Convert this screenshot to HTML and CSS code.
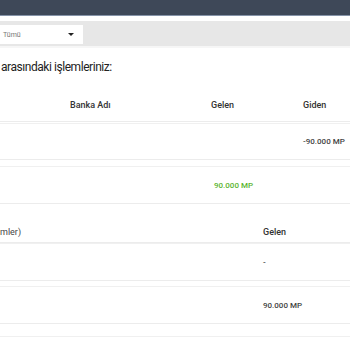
FILE: index.html
```html
<!DOCTYPE html>
<html lang="tr">
<head>
  <meta charset="UTF-8">
  <meta name="viewport" content="width=device-width, initial-scale=1.0">
  <title>Hesap Hareketleri</title>
  <link rel="stylesheet" href="styles.css">
</head>
<body>
  <div class="topbar"></div>

  <div class="filter">
    <div class="select">
      <span>Tümü</span>
      <span class="caret"></span>
    </div>
  </div>

  <p class="title">arasındaki işlemleriniz:</p>

  <div class="table bank">
    <div class="row head">
      <div></div>
      <div>Banka Adı</div>
      <div>Gelen</div>
      <div>Giden</div>
    </div>
    <div class="row">
      <div></div>
      <div></div>
      <div></div>
      <div class="value">-90.000 MP</div>
    </div>
    <div class="row">
      <div></div>
      <div></div>
      <div class="value green">90.000 MP</div>
      <div></div>
    </div>
  </div>

  <div class="table other">
    <div class="row head">
      <div class="label">mler)</div>
      <div>Gelen</div>
    </div>
    <div class="row">
      <div></div>
      <div class="value">-</div>
    </div>
    <div class="row">
      <div></div>
      <div class="value">90.000 MP</div>
    </div>
    <div class="row last"></div>
  </div>
</body>
</html>
```

FILE: styles.css
```css
body {
  margin: 0;
  font-family: Roboto, "Noto Sans", sans-serif;
  color: #333;
  background: #fff;
  overflow: hidden;
}

.topbar {
  height: 15px;
  background: #3e4858;
  border-bottom: 1px solid #8593a8;
  margin-bottom: 5px;
}

.filter {
  height: 27px;
  background: #e7e7e7;
  padding-top: 4px;
  box-sizing: border-box;
  border-bottom: 2px solid #f6f6f6;
}

.select {
  width: 83px;
  height: 19px;
  background: #fff;
  display: flex;
  align-items: center;
  justify-content: space-between;
  padding: 0 9px 0 3px;
  box-sizing: border-box;
  font-size: 7px;
  color: #777;
}

.caret {
  width: 0;
  height: 0;
  border-left: 3px solid transparent;
  border-right: 3px solid transparent;
  border-top: 3px solid #222;
}

.title {
  margin: 12px 0 0 1px;
  height: 28px;
  font-size: 12px;
  letter-spacing: -0.45px;
  color: #222;
}

.row {
  display: grid;
  align-items: center;
  box-sizing: border-box;
  border-top: 1px solid #f0f0f0;
  border-bottom: 1px solid #ececec;
  font-size: 8px;
  font-weight: 500;
}

.bank .row {
  grid-template-columns: 70px 141px 92px 1fr;
  height: 37px;
  margin-bottom: 6px;
}

.bank .row:last-child {
  height: 38px;
  margin-bottom: 0;
}

.bank .head {
  height: 34px;
  border-top: none;
  margin-bottom: 1px;
}

.other .row {
  grid-template-columns: 263px 1fr;
  height: 38px;
  margin-bottom: 5px;
}

.other .head {
  height: 21px;
  margin-top: 18px;
  border-top: none;
  margin-bottom: 0;
}

.head {
  font-size: 9px;
  color: #333;
}

.value {
  color: #444;
}

.green {
  color: #5cb531;
  padding-left: 3px;
}

.label {
  font-weight: 400;
  color: #444;
}

.other .last {
  height: 10px;
  margin-top: 12px;
  border-bottom: none;
}
```
